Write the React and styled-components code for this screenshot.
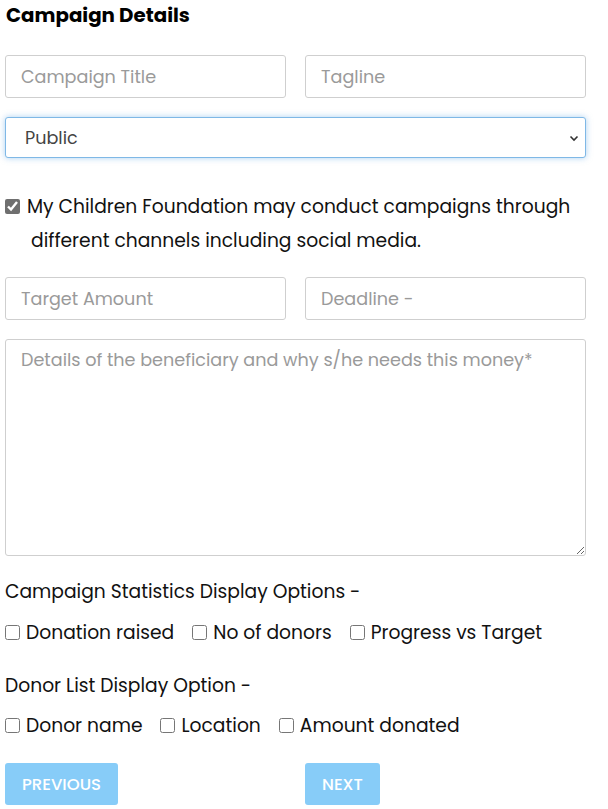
import React from 'react';
import styled, { createGlobalStyle } from 'styled-components';

const GlobalStyle = createGlobalStyle`
  body, html {
    margin: 0;
    padding: 0;
    background: #fff;
  }
  body {
    font-family: "Poppins", "Open Sans", "Noto Sans", sans-serif;
    color: #111;
  }
`;

const Wrapper = styled.div`
  width: 581px;
  margin-left: 5px;
`;

const Title = styled.h3`
  margin: 0 0 25px 1px;
  font-size: 19.8px;
  font-weight: 700;
  line-height: 30px;
  color: #000;
`;

const Grid = styled.div`
  display: grid;
  grid-template-columns: 1fr 1fr;
  column-gap: 19px;
  row-gap: 19px;
`;

const Input = styled.input`
  box-sizing: border-box;
  width: 100%;
  height: 43px;
  padding: 0 15px;
  border: 1px solid #cfcfcf;
  border-radius: 3px;
  font-family: inherit;
  font-size: 17.6px;
  color: #444;
  outline: none;

  &::placeholder {
    color: #9a9a9a;
  }
`;

const SelectWrap = styled.div`
  grid-column: 1 / -1;
  position: relative;
`;

const Select = styled.select`
  box-sizing: border-box;
  width: 100%;
  height: 41px;
  padding: 0 19px;
  border: 1px solid #7fb8e6;
  border-radius: 3px;
  box-shadow: 0 0 6px rgba(100, 170, 230, 0.55);
  font-family: inherit;
  font-size: 17.6px;
  color: #444;
  background: #fff;
  appearance: none;
  outline: none;
`;

const Chevron = styled.svg`
  position: absolute;
  right: 6px;
  top: 15px;
  pointer-events: none;
`;

const Consent = styled.label`
  grid-column: 1 / -1;
  display: flex;
  align-items: flex-start;
  gap: 3px;
  margin-top: 13px;
  font-size: 18.7px;
  line-height: 34px;
  color: #111;
`;

const ConsentText = styled.span`
  padding-left: 8px;
  text-indent: -4px;
`;

const Box = styled.input`
  width: 15px;
  height: 15px;
  margin: ${(p) => (p.$top ? '9px 0 0 0' : '0')};
  accent-color: #6f6f6f;
  flex: none;
`;

const TextArea = styled.textarea`
  grid-column: 1 / -1;
  box-sizing: border-box;
  width: 100%;
  height: 217px;
  padding: 7px 15px;
  border: 1px solid #cfcfcf;
  border-radius: 3px;
  font-family: inherit;
  font-size: 17.6px;
  line-height: 26px;
  color: #444;
  outline: none;

  &::placeholder {
    color: #9a9a9a;
  }
`;

const SectionLabel = styled.div`
  margin-top: ${(p) => p.$mt}px;
  font-size: 18.7px;
  line-height: 27px;
  color: #111;
`;

const OptionRow = styled.div`
  display: flex;
  align-items: center;
  gap: 18px;
  margin-top: ${(p) => p.$mt}px;
  height: 27px;
`;

const Option = styled.label`
  display: flex;
  align-items: center;
  gap: 6px;
  font-size: 18.7px;
  color: #111;
`;

const ButtonRow = styled(Grid)`
  margin-top: 24px;
  justify-items: start;
`;

const NavButton = styled.button`
  height: 42px;
  padding: 0 17px;
  border: none;
  border-radius: 3px;
  background: #87ccf8;
  color: #fff;
  font-family: inherit;
  font-size: 16.5px;
  font-weight: 500;
  text-transform: uppercase;
`;

const statOptions = ['Donation raised', 'No of donors', 'Progress vs Target'];
const donorOptions = ['Donor name', 'Location', 'Amount donated'];

const App = () => {
  return (
    <>
      <GlobalStyle />
      <Wrapper>
        <Title>Campaign Details</Title>
        <Grid>
          <Input placeholder="Campaign Title" />
          <Input placeholder="Tagline" />
          <SelectWrap>
            <Select defaultValue="public">
              <option value="public">Public</option>
              <option value="private">Private</option>
            </Select>
            <Chevron width="12" height="12" viewBox="0 0 12 12">
              <path d="M2.5 4.5 L6 8 L9.5 4.5" fill="none" stroke="#333" strokeWidth="1.6" />
            </Chevron>
          </SelectWrap>
          <Consent>
            <Box type="checkbox" defaultChecked $top />
            <ConsentText>
              My Children Foundation may conduct campaigns through different channels including social media.
            </ConsentText>
          </Consent>
          <Input placeholder="Target Amount" />
          <Input placeholder="Deadline -" />
          <TextArea placeholder="Details of the beneficiary and why s/he needs this money*" />
        </Grid>

        <SectionLabel $mt={22}>Campaign Statistics Display Options -</SectionLabel>
        <OptionRow $mt={14}>
          {statOptions.map((o) => (
            <Option key={o}>
              <Box type="checkbox" />
              {o}
            </Option>
          ))}
        </OptionRow>

        <SectionLabel $mt={26}>Donor List Display Option -</SectionLabel>
        <OptionRow $mt={13}>
          {donorOptions.map((o) => (
            <Option key={o}>
              <Box type="checkbox" />
              {o}
            </Option>
          ))}
        </OptionRow>

        <ButtonRow>
          <NavButton>Previous</NavButton>
          <NavButton>Next</NavButton>
        </ButtonRow>
      </Wrapper>
    </>
  );
};

export default App;
